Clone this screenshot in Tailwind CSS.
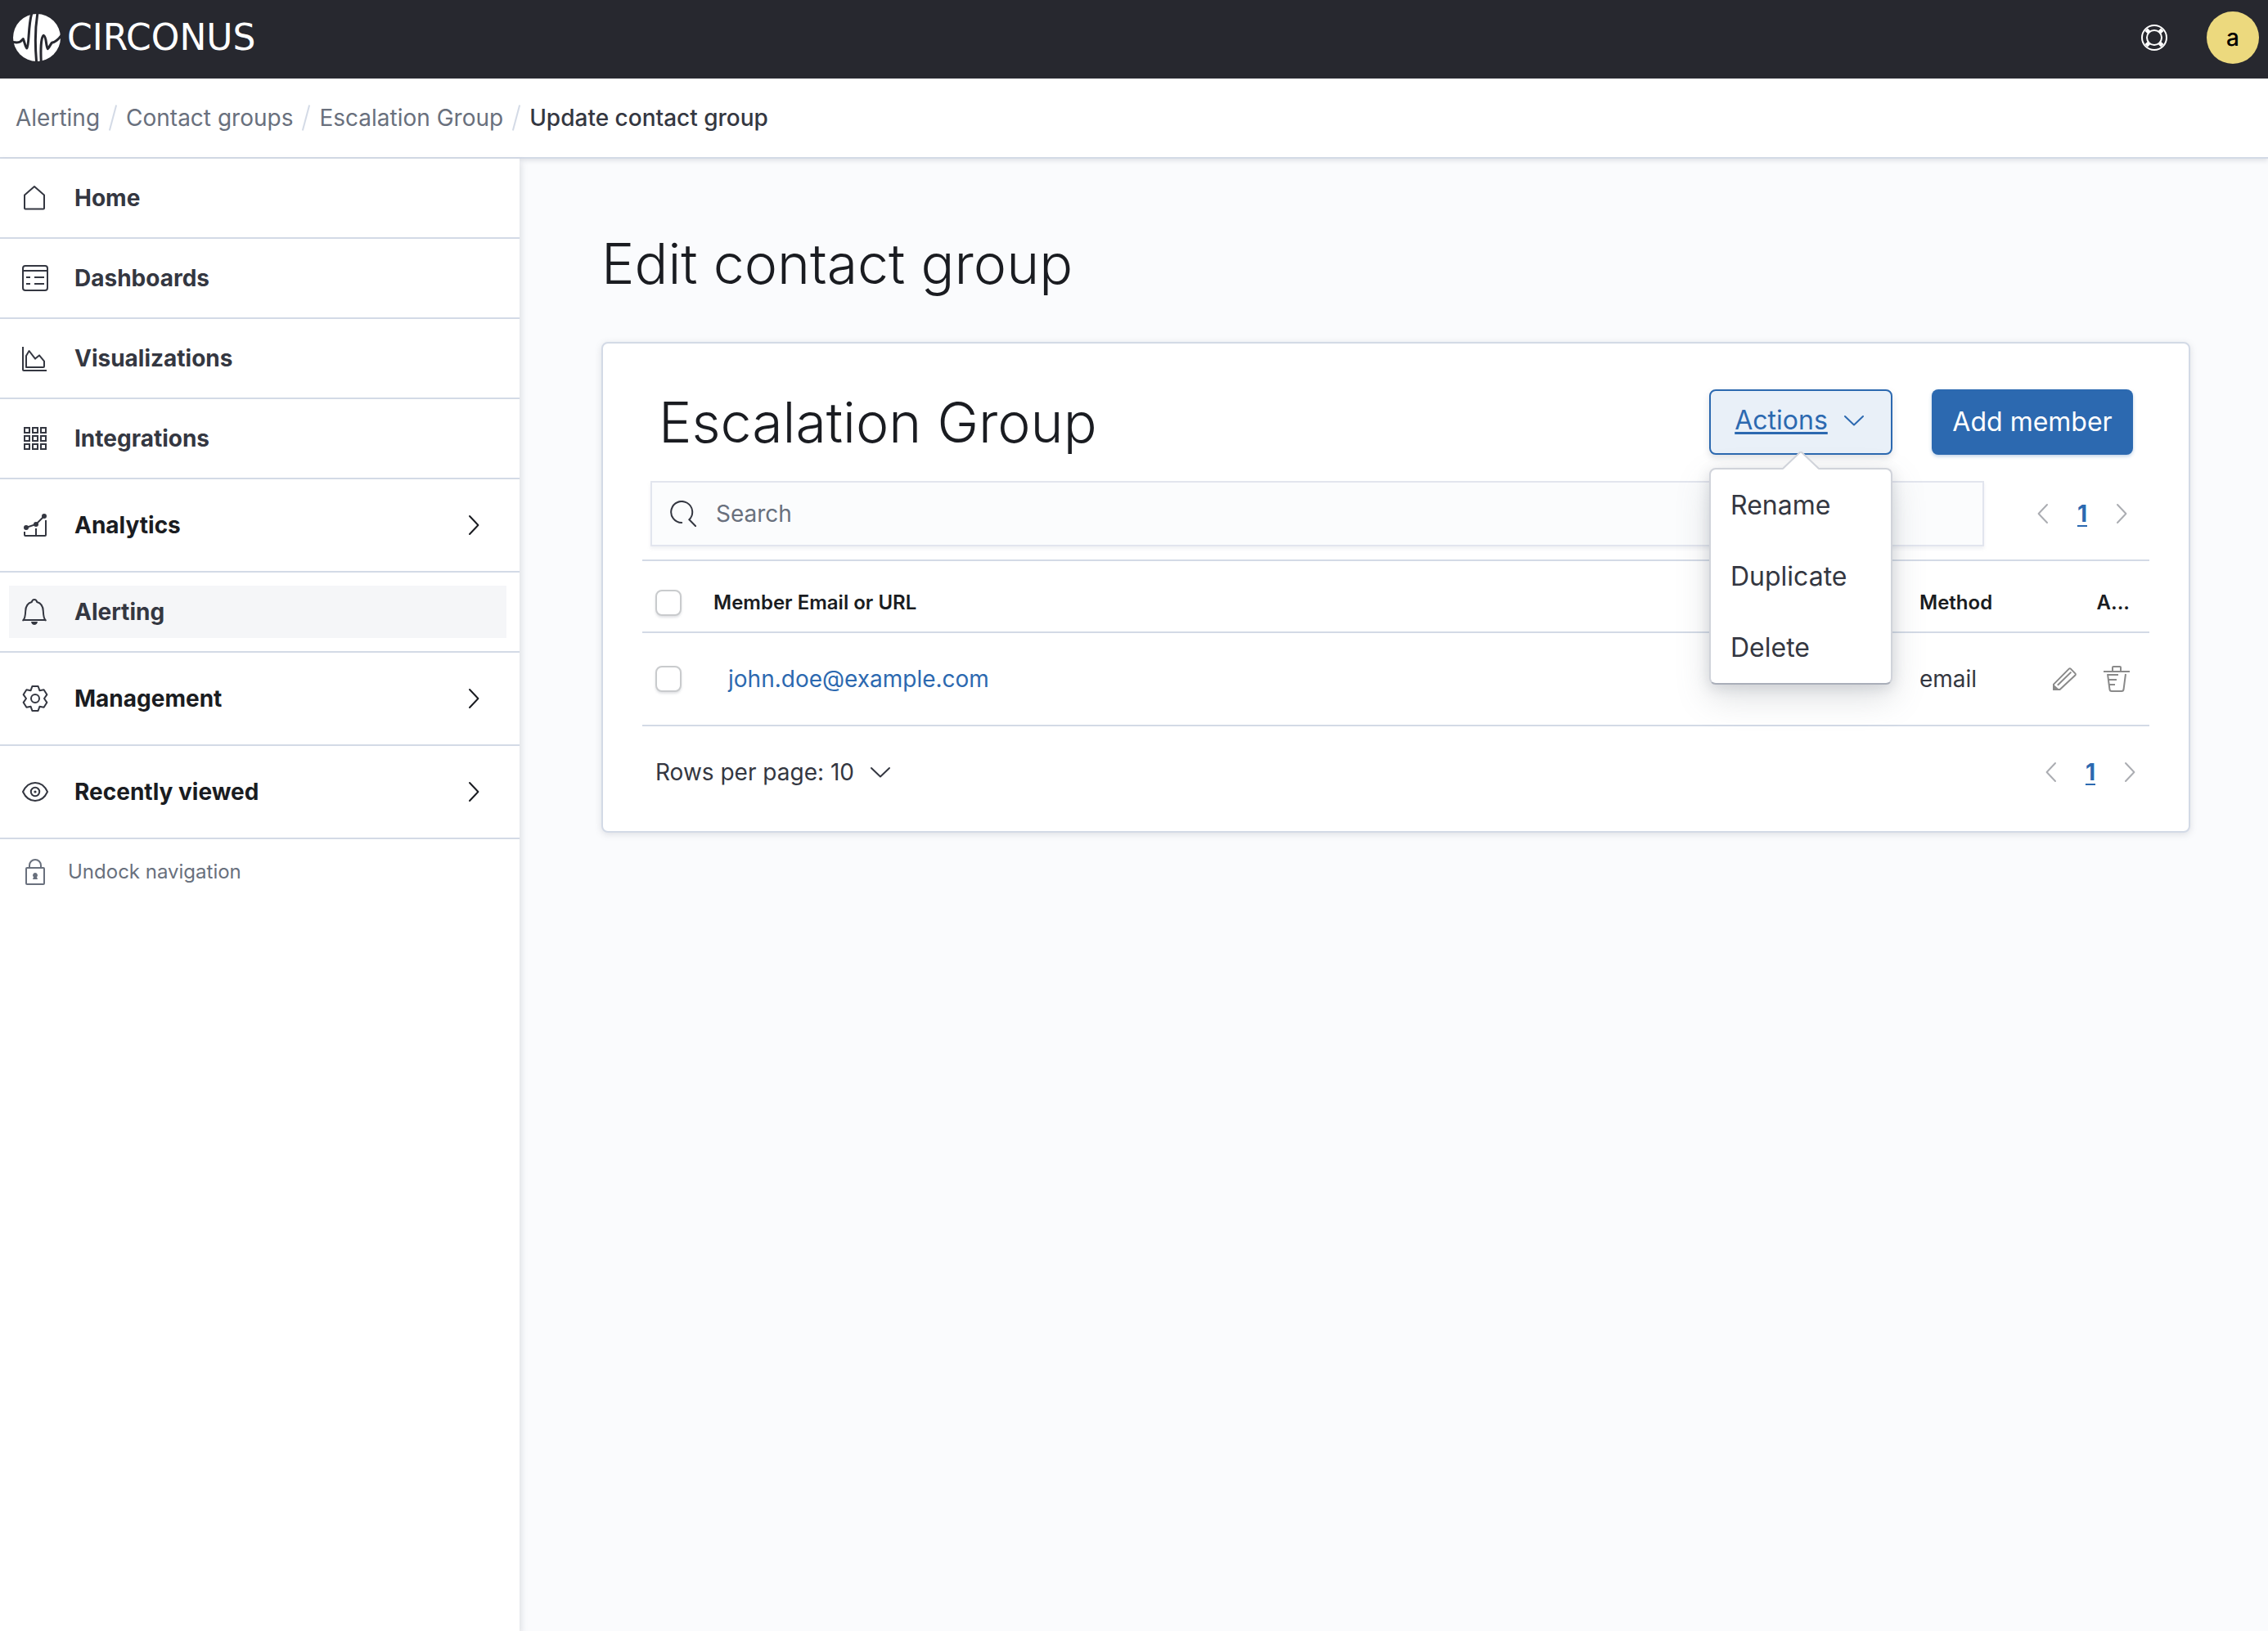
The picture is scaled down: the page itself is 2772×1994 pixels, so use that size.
<!DOCTYPE html>
<html lang="en">
<head>
<meta charset="utf-8">
<meta name="viewport" content="width=device-width, initial-scale=1">
<title>Update contact group - Circonus</title>
<script src="https://cdn.jsdelivr.net/npm/@tailwindcss/browser@4"></script>
</head>
<body class="flex min-h-screen flex-col bg-[#fafbfd] font-['Inter',sans-serif] text-[28px] leading-10 text-[#343741] antialiased">
<svg class="hidden" aria-hidden="true">
  <symbol id="chev-right" viewBox="0 0 16 16"><path fill="none" stroke="currentColor" stroke-linecap="round" stroke-linejoin="round" d="M5.500 2.500 10.700 8l-5.200 5.500"/></symbol>
  <symbol id="chev-left" viewBox="0 0 16 16"><path fill="none" stroke="currentColor" stroke-linecap="round" stroke-linejoin="round" d="M10.500 2.500 5.300 8l5.200 5.500"/></symbol>
  <symbol id="chev-down" viewBox="0 0 16 16"><path fill="none" stroke="currentColor" stroke-linecap="round" stroke-linejoin="round" d="M2.500 5.500 8 10.700l5.500-5.200"/></symbol>
</svg>

<header class="flex h-24 items-center justify-between bg-[#27282f] pr-[11px] pb-1 pl-4">
  <a href="#" class="flex items-center gap-2 text-white">
    <svg class="size-[58px]" viewBox="48 51 174 174" fill="none" aria-hidden="true">
      <circle cx="135" cy="138" r="87" fill="#fff"/>
      <g stroke="#27282f" stroke-width="9" stroke-linejoin="round">
        <path d="M44 154c12 2 24 3 30-1 4-3 7-6 11-10 5 10 6 24 13 34 10-8 4-82 19-130"/>
        <path d="M138 46c-9 54-10 120-4 184"/>
        <path d="M151 230c-2-38-2-94 9-100 11 4 7 34 15 49 7-6 9-16 15-22 10-2 24-12 36-28"/>
      </g>
    </svg>
    <span class="font-['DejaVu_Sans',sans-serif] text-[44px] leading-[58px]">CIRCONUS</span>
  </a>
  <div class="flex items-center gap-12">
    <button type="button" aria-label="Help" class="text-white">
      <svg class="size-8" viewBox="0 0 16 16" fill="none" stroke="currentColor"><circle cx="8" cy="8" r="7.500"/><circle cx="8" cy="8" r="4.500"/><path stroke-width="2.400" d="M3.100 3.100l1.600 1.600M11.300 11.300l1.600 1.600M12.900 3.100l-1.600 1.600M4.700 11.300l-1.600 1.600"/></svg>
    </button>
    <button type="button" aria-label="Account" class="size-16 rounded-full bg-[#ecd97e] font-medium text-black">a</button>
  </div>
</header>

<nav aria-label="Breadcrumb" class="relative z-10 h-[98px] border-b-2 border-[#d3dae6] bg-white px-[19px] text-[#69707d] shadow-[0_2px_6px_rgba(105,112,125,0.2)]">
  <ol class="flex h-full items-center gap-[15px]">
    <li><a href="#">Alerting</a></li>
    <li aria-hidden="true" class="h-8 w-0.5 rotate-15 bg-[#d3dae6]"></li>
    <li><a href="#">Contact groups</a></li>
    <li aria-hidden="true" class="h-8 w-0.5 rotate-15 bg-[#d3dae6]"></li>
    <li><a href="#">Escalation Group</a></li>
    <li aria-hidden="true" class="h-8 w-0.5 rotate-15 bg-[#d3dae6]"></li>
    <li aria-current="page" class="font-medium text-[#343741]">Update contact group</li>
  </ol>
</nav>

<div class="flex flex-1">
  <aside class="relative z-20 w-[635px] shrink-0 bg-white shadow-[2px_4px_8px_rgba(105,112,125,0.2)]">
    <nav aria-label="Main">
      <ul class="font-bold">
        <li class="border-b-2 border-[#d3dae6] py-4">
          <a href="#" class="mr-4 ml-[11px] flex h-16 items-center gap-8 px-4">
            <svg class="size-8" viewBox="0 0 16 16" fill="none" stroke="currentColor" stroke-linejoin="round"><path d="M1.500 6.200 7.500 1l6 5.200v8.100a.5.500 0 0 1-.5.500H2a.5.500 0 0 1-.5-.5z"/></svg>
            Home
          </a>
        </li>
        <li class="border-b-2 border-[#d3dae6] py-4">
          <a href="#" class="mr-4 ml-[11px] flex h-16 items-center gap-8 px-4">
            <svg class="size-8" viewBox="0 0 16 16" fill="none" stroke="currentColor"><rect x=".5" y=".5" width="15" height="15" rx="1.500"/><path d="M.5 3.500h15M2.500 7.500H5M7.500 7.500h6M2.500 11.500H5M7.500 11.500h6"/></svg>
            Dashboards
          </a>
        </li>
        <li class="border-b-2 border-[#d3dae6] py-4">
          <a href="#" class="mr-4 ml-[11px] flex h-16 items-center gap-8 px-4">
            <svg class="size-8" viewBox="0 0 16 16" fill="none" stroke="currentColor" stroke-linejoin="round"><path d="M.5 1v14a.5.500 0 0 0 .5.500h14M2.500 13.500v-7l1.800-3L8 8.300l2.500-2.100 3 3.600v3.200a.5.500 0 0 1-.5.500z"/></svg>
            Visualizations
          </a>
        </li>
        <li class="border-b-2 border-[#d3dae6] py-4">
          <a href="#" class="mr-4 ml-[11px] flex h-16 items-center gap-8 px-4">
            <svg class="size-8" viewBox="0 0 16 16" fill="none" stroke="currentColor"><path d="M1.500 1.500h3v3h-3zM6.500 1.500h3v3h-3zM11.500 1.500h3v3h-3zM1.500 6.500h3v3h-3zM6.500 6.500h3v3h-3zM11.500 6.500h3v3h-3zM1.500 11.500h3v3h-3zM6.500 11.500h3v3h-3zM11.500 11.500h3v3h-3z"/></svg>
            Integrations
          </a>
        </li>
        <li class="border-b-2 border-[#d3dae6]">
          <button type="button" class="flex h-28 w-full items-center gap-8 pr-10 pl-[27px] text-[#1a1c21]">
            <svg class="size-8 text-[#343741]" viewBox="0 0 16 16" fill="none" stroke="currentColor"><path d="M1.500 12v2a.5.500 0 0 0 .5.500h12a.5.500 0 0 0 .5-.5V5M8.500 10v4.500M2.500 9.500l6-2 5-5"/><g fill="currentColor" stroke="none"><circle cx="2.500" cy="9.500" r="1.500"/><circle cx="8.500" cy="7.500" r="1.500"/><circle cx="13.500" cy="2.500" r="1.500"/></g></svg>
            <span class="flex-1 text-left">Analytics</span>
            <svg class="size-8" aria-hidden="true"><use href="#chev-right"/></svg>
          </button>
        </li>
        <li class="border-b-2 border-[#d3dae6] py-4">
          <a href="#" aria-current="page" class="mr-4 ml-[11px] flex h-16 items-center gap-8 bg-[#f5f6f8] px-4">
            <svg class="size-8" viewBox="0 0 16 16" fill="none" stroke="currentColor" stroke-linejoin="round"><path d="M.6 13.200c1.300-1 1.400-3 1.500-5.700C2.200 4.200 3.700 2.600 5.900 2c.2-.9.800-1.500 1.600-1.500s1.400.6 1.600 1.500c2.200.6 3.700 2.200 3.800 5.500.1 2.700.2 4.700 1.500 5.700l-.6-.2H1.200z"/><path fill="currentColor" stroke="none" d="M5.500 14h4c-.2 1.200-1 2-2 2s-1.800-.8-2-2z"/></svg>
            Alerting
          </a>
        </li>
        <li class="border-b-2 border-[#d3dae6]">
          <button type="button" class="flex h-28 w-full items-center gap-8 pr-10 pl-[27px] text-[#1a1c21]">
            <svg class="size-8 text-[#343741]" viewBox="0 0 16 16" fill="none" stroke="currentColor" stroke-linejoin="round"><path d="M6.200.5h3.600l.9 2.600 2.600-.5 1.900 3L13.500 8l1.700 2.400-1.900 3-2.600-.5-.9 2.600H6.200l-.9-2.600-2.600.5-1.900-3L2.500 8 .8 5.600l1.900-3 2.600.5z"/><circle cx="8" cy="8" r="2.500"/></svg>
            <span class="flex-1 text-left">Management</span>
            <svg class="size-8" aria-hidden="true"><use href="#chev-right"/></svg>
          </button>
        </li>
        <li class="border-b-2 border-[#d3dae6]">
          <button type="button" class="flex h-28 w-full items-center gap-8 pr-10 pl-[27px] text-[#1a1c21]">
            <svg class="size-8 text-[#343741]" viewBox="0 0 16 16" fill="none" stroke="currentColor" stroke-linejoin="round"><path d="M.5 8C2 4.800 4.800 2.500 8 2.500S14 4.800 15.500 8C14 11.200 11.200 13.500 8 13.500S2 11.200.5 8z"/><circle cx="8" cy="8" r="2.600"/><circle cx="8" cy="8" r=".8" fill="currentColor" stroke="none"/></svg>
            <span class="flex-1 text-left">Recently viewed</span>
            <svg class="size-8" aria-hidden="true"><use href="#chev-right"/></svg>
          </button>
        </li>
      </ul>
    </nav>
    <button type="button" class="flex h-20 items-center gap-6 pl-[27px] text-[24px] text-[#69707d]">
      <svg class="size-8" viewBox="0 0 16 16" fill="none" stroke="currentColor"><rect x="2.500" y="5.500" width="11" height="10" rx=".5"/><path d="M4.500 5.500V4a3.500 3.500 0 0 1 7 0v1.500"/><path fill="currentColor" stroke="none" d="M8 8.500a1.500 1.500 0 0 1 1 2.600l.5 1.400h-3l.5-1.400a1.500 1.500 0 0 1 1-2.600z"/></svg>
      Undock navigation
    </button>
  </aside>

  <main class="min-w-0 flex-1 pt-20 pr-[95px] pl-[100px] text-[#1a1c21]">
    <h1 class="text-[68px] leading-24 font-light">Edit contact group</h1>

    <section class="mt-12 rounded-lg border-2 border-[#d3dae6] bg-white px-12 pt-14 pb-4 shadow-[0_2px_8px_rgba(105,112,125,0.2)]">
      <div class="flex items-center gap-12 px-5">
        <h2 class="min-w-0 flex-1 text-[68px] leading-20 font-light">Escalation Group</h2>
        <div class="relative z-10">
          <button type="button" aria-expanded="true" aria-haspopup="menu" class="flex h-20 w-56 items-center justify-center gap-4 rounded-lg border-2 border-[#2c69b0] bg-[#e9f0f8] pb-1 text-[32px] text-[#2c69b0] shadow-[0_4px_8px_rgba(105,112,125,0.2)]">
            <span class="underline decoration-3 underline-offset-3">Actions</span>
            <svg class="size-8" aria-hidden="true"><use href="#chev-down"/></svg>
          </button>
          <ul role="menu" class="absolute inset-x-0 top-24 rounded-lg border-2 border-[#d0d3da] border-b-[#a9aeb9] bg-white text-[32px] text-[#343741] shadow-[0_16px_40px_rgba(105,112,125,0.22),0_4px_16px_rgba(105,112,125,0.2)]">
            <li role="presentation"><button type="button" role="menuitem" class="h-[87px] w-full px-6 text-left">Rename</button></li>
            <li role="presentation"><button type="button" role="menuitem" class="h-[87px] w-full px-6 text-left">Duplicate</button></li>
            <li role="presentation"><button type="button" role="menuitem" class="h-[87px] w-full px-6 text-left">Delete</button></li>
          </ul>
          <svg class="absolute top-[76px] left-1/2 h-[22px] w-11 -translate-x-1/2" viewBox="0 0 44 22" aria-hidden="true"><path fill="#fff" d="M0 22 22 0l22 22z"/><path fill="none" stroke="#d0d3da" stroke-width="2" d="M0 21 22 0l22 21"/><path fill="#fff" d="M2 22 22 2l20 20z"/></svg>
        </div>
        <button type="button" class="h-20 w-[246px] rounded-lg bg-[#2c69b0] text-[32px] text-white shadow-[0_2px_4px_rgba(44,105,176,0.3)]">Add member</button>
      </div>

      <div class="mt-8 flex items-center justify-between gap-14 pr-[18px] pl-[10px]">
        <label class="flex h-20 flex-1 items-center gap-6 border-2 border-[#e2e5ee] bg-[#fbfcfd] px-[22px] shadow-[0_3px_4px_rgba(152,162,179,0.15)]">
          <svg class="size-8 text-[#343741]" viewBox="0 0 16 16" fill="none" stroke="currentColor" stroke-linecap="round" aria-hidden="true"><path d="M7.100 13.500A6.500 6.500 0 1 1 11.700 11.600L15.600 15.600"/></svg>
          <input type="search" aria-label="Search" placeholder="Search" class="min-w-0 flex-1 bg-transparent outline-none placeholder:text-[#69707d]">
        </label>
        <nav aria-label="Pages, top" class="flex items-center gap-[26px]">
          <button type="button" aria-label="Previous page" disabled class="text-[#abadb2]"><svg class="size-8"><use href="#chev-left"/></svg></button>
          <a href="#" aria-current="page" class="font-bold text-[#2c69b0] underline decoration-2 underline-offset-4">1</a>
          <button type="button" aria-label="Next page" disabled class="text-[#abadb2]"><svg class="size-8"><use href="#chev-right"/></svg></button>
        </nav>
      </div>

      <table class="mt-4 w-full table-fixed border-collapse">
        <thead class="text-[24px]">
          <tr class="h-[88px] border-y-2 border-[#d3dae6] text-left">
            <th scope="col" class="w-[77px] pt-4 pl-4"><input type="checkbox" aria-label="Select all rows" class="block size-8 appearance-none rounded-lg border-2 border-[#c9cbcd] bg-white shadow-[0_2px_3px_rgba(105,112,125,0.2)]"></th>
            <th scope="col" class="px-2.5 pt-4 font-semibold">Member Email or URL</th>
            <th scope="col" class="w-[165px] px-2.5 pt-4 font-semibold">Method</th>
            <th scope="col" class="w-[126px] pt-4 pr-6 text-right font-semibold">A...</th>
          </tr>
        </thead>
        <tbody class="text-[#343741]">
          <tr class="h-[114px] border-b-2 border-[#d3dae6]">
            <td class="pl-4"><input type="checkbox" aria-label="Select this row" class="block size-8 appearance-none rounded-lg border-2 border-[#c9cbcd] bg-white shadow-[0_2px_3px_rgba(105,112,125,0.2)]"></td>
            <td class="pl-7"><a href="#" class="text-[#2c69b0]">john.doe@example.com</a></td>
            <td class="px-2.5">email</td>
            <td class="pr-6">
              <div class="flex justify-end gap-8 text-[#8a8a8a]">
                <button type="button" aria-label="Edit"><svg class="size-8" viewBox="0 0 16 16" fill="none" stroke="currentColor" stroke-linejoin="round"><path d="M1.500 11.300 10.900 1.800a.7.700 0 0 1 1 0l2.800 2.900a.7.700 0 0 1 0 1L5.300 14.500H1.500zM3.900 11.900l8.300-8.100"/><path fill="currentColor" stroke="none" d="M1 11l4.500 4H1.500a.5.500 0 0 1-.5-.5z"/></svg></button>
                <button type="button" aria-label="Delete"><svg class="size-8" viewBox="0 0 16 16" fill="none" stroke="currentColor"><path d="M0 3.500h16M5.500 3.500V1a.5.500 0 0 1 .5-.5h4a.5.500 0 0 1 .5.500v2.500M2.500 5l1.200 9.200q.1 1.300 1.300 1.300h6q1.200 0 1.300-1.300L13.500 5M2.500 5.500H9M3 8.500h5M3.400 11.500H7"/></svg></button>
              </div>
            </td>
          </tr>
        </tbody>
      </table>

      <div class="flex h-28 items-center justify-between pr-2 pl-4 text-[#343741]">
        <label class="flex items-center gap-4">
          <select aria-label="Rows per page" class="appearance-none bg-transparent">
            <option>Rows per page: 10</option>
          </select>
          <svg class="pointer-events-none size-8" aria-hidden="true"><use href="#chev-down"/></svg>
        </label>
        <nav aria-label="Pages, bottom" class="flex items-center gap-[26px]">
          <button type="button" aria-label="Previous page" disabled class="text-[#abadb2]"><svg class="size-8"><use href="#chev-left"/></svg></button>
          <a href="#" aria-current="page" class="font-bold text-[#2c69b0] underline decoration-2 underline-offset-4">1</a>
          <button type="button" aria-label="Next page" disabled class="text-[#abadb2]"><svg class="size-8"><use href="#chev-right"/></svg></button>
        </nav>
      </div>
    </section>
  </main>
</div>
</body>
</html>
